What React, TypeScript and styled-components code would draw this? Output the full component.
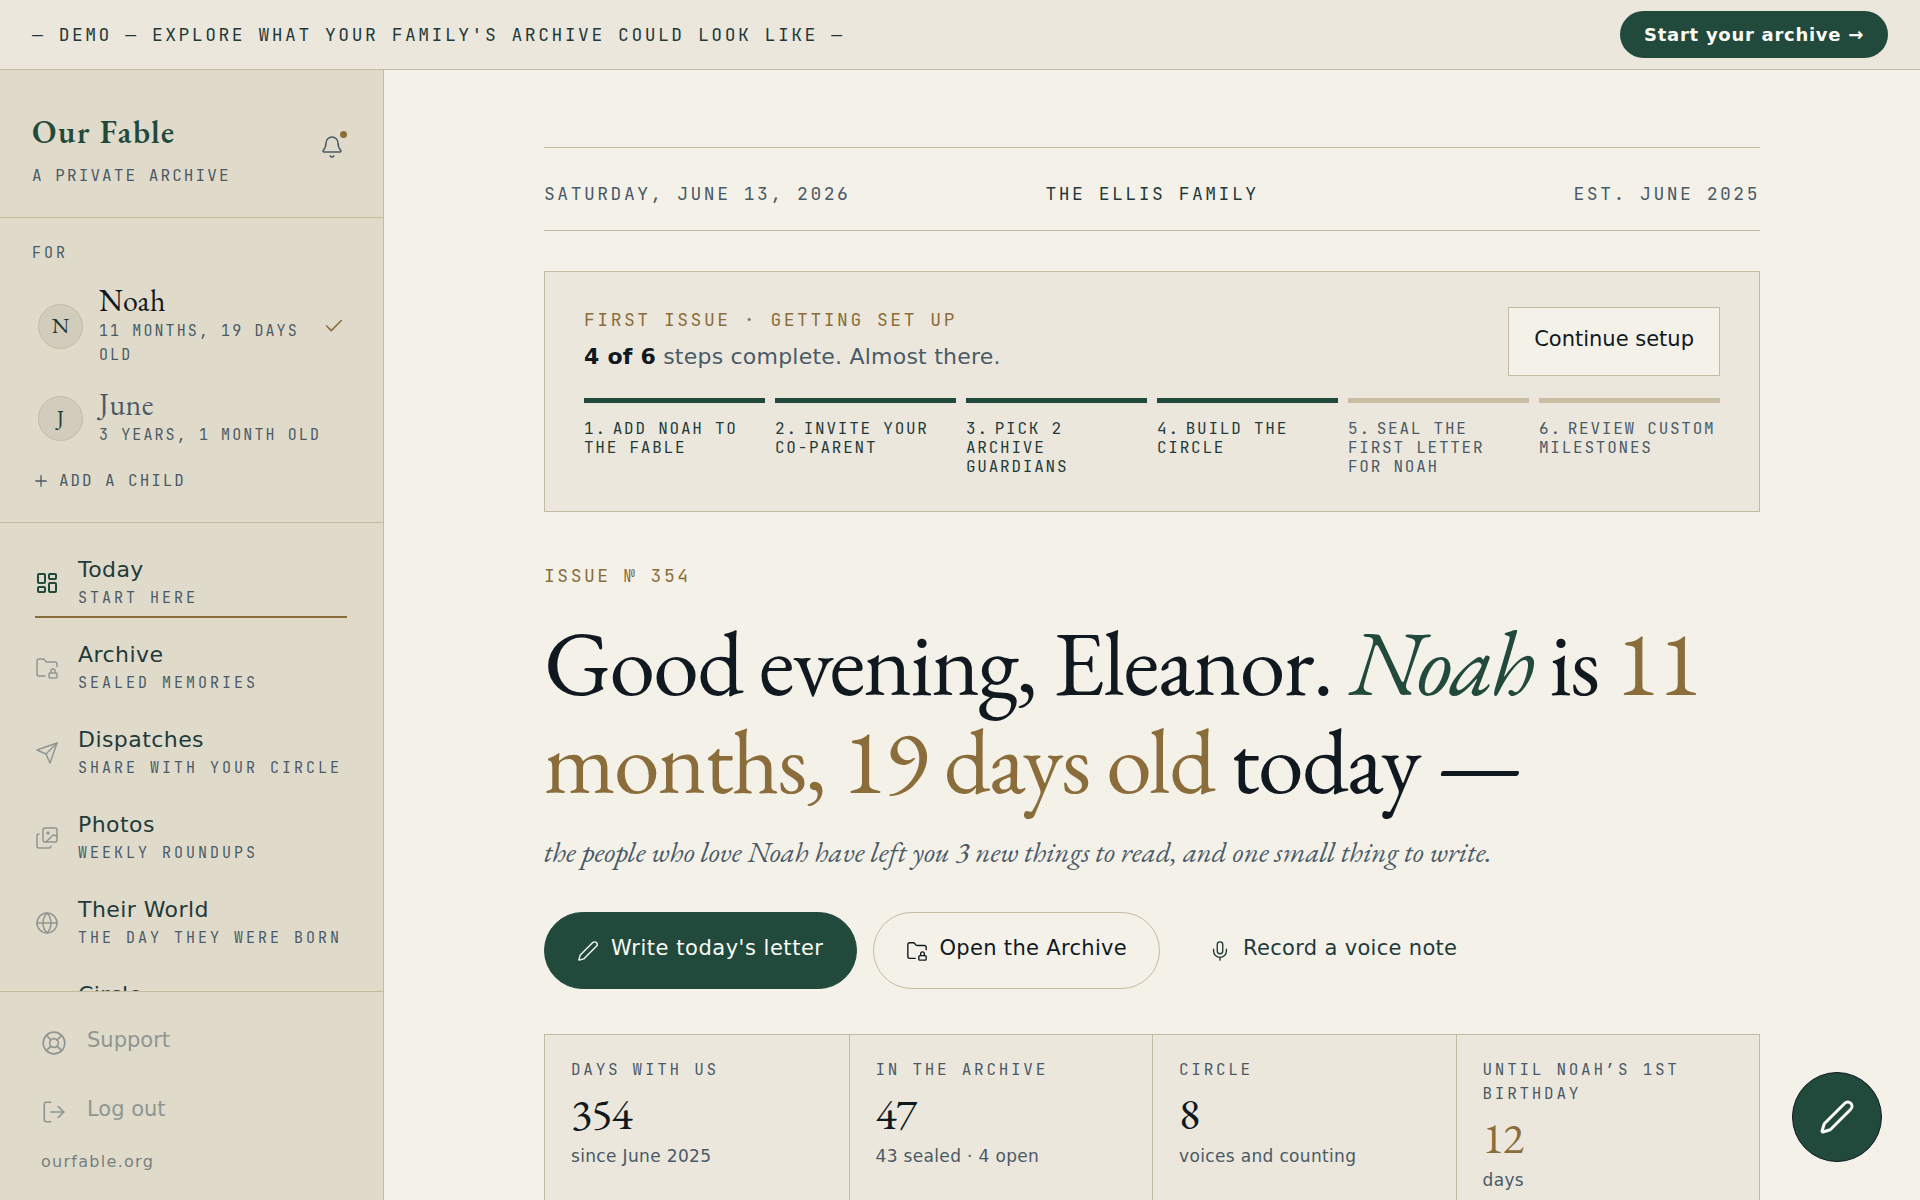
import React from "react";
import styled, { createGlobalStyle } from "styled-components";
import {
  Bell,
  Check,
  FolderLock,
  Globe,
  Images,
  LayoutDashboard,
  LifeBuoy,
  LogOut,
  Mic,
  Plus,
  Users,
} from "lucide-react";

const color = {
  paper: "#f4f1e9",
  panel: "#ebe7dc",
  sidebar: "#e0daca",
  rule: "#c5bba0",
  pending: "#c8bea4",
  green: "#214a3c",
  gold: "#8b6d3b",
  ink: "#101820",
  pine: "#1f3a3a",
  slate: "#4a5a66",
  muted: "#8f9692",
};

const serif = `"EB Garamond", "Liberation Serif", serif`;
const mono = `"JetBrains Mono", "DejaVu Sans Mono", monospace`;
const sans = `"DejaVu Sans", sans-serif`;

const GlobalStyle = createGlobalStyle`
  *, *::before, *::after { box-sizing: border-box; }
  body {
    margin: 0;
    background: ${color.paper};
    color: ${color.ink};
    font-family: ${sans};
  }
  h1, h2, p, ul, ol, dl, dd { margin: 0; padding: 0; }
  ul, ol { list-style: none; }
  a { color: inherit; text-decoration: none; }
  button { margin: 0; padding: 0; border: 0; background: none; color: inherit; font: inherit; cursor: pointer; }
  svg { display: block; flex: none; }
`;

const Shell = styled.div`
  height: 100vh;
  display: grid;
  grid-template-rows: auto minmax(0, 1fr);
`;

const DemoBar = styled.header`
  display: flex;
  align-items: center;
  justify-content: space-between;
  padding: 11px 32px;
  background: ${color.panel};
  border-bottom: 1px solid ${color.rule};
`;

const Kicker = styled.p<{ $tone?: string }>`
  font: 400 18px/26px ${mono};
  letter-spacing: 0.14em;
  text-transform: uppercase;
  color: ${(p) => p.$tone ?? color.slate};
`;

const StartLink = styled.a`
  padding: 0 24px;
  border-radius: 24px;
  background: ${color.green};
  color: #fbfaf5;
  font: 700 18px/47px ${sans};
  letter-spacing: 0.04em;
`;

const Body = styled.div`
  display: grid;
  grid-template-columns: 384px minmax(0, 1fr);
  min-height: 0;
`;

const Sidebar = styled.aside`
  display: flex;
  flex-direction: column;
  min-height: 0;
  background: ${color.sidebar};
  border-right: 1px solid ${color.rule};
`;

const Brand = styled.div`
  display: flex;
  align-items: center;
  justify-content: space-between;
  padding: 36px 32px 29px;
  border-bottom: 1px solid ${color.rule};
`;

const BrandText = styled.div`
  display: grid;
  gap: 6px;
`;

const BrandName = styled.a`
  font: 600 32px/52px ${serif};
  letter-spacing: 0.05em;
  color: ${color.green};
`;

const Tagline = styled.p`
  font: 400 16px/24px ${mono};
  letter-spacing: 0.13em;
  text-transform: uppercase;
  color: ${color.slate};
`;

const BellButton = styled.button`
  position: relative;
  display: grid;
  place-items: center;
  width: 38px;
  height: 40px;
  color: ${color.slate};
`;

const BellDot = styled.span`
  position: absolute;
  top: 4px;
  right: 4px;
  width: 7px;
  height: 7px;
  border-radius: 50%;
  background: ${color.gold};
`;

const Children = styled.section`
  padding: 23px 32px 29px;
  border-bottom: 1px solid ${color.rule};
`;

const SmallCaps = styled.span<{ $track?: string }>`
  display: block;
  font: 400 15px/24px ${mono};
  letter-spacing: ${(p) => p.$track ?? "0.2em"};
  text-transform: uppercase;
  color: ${color.slate};
`;

const ChildList = styled.ul`
  display: grid;
  gap: 4px;
  padding: 11px 0 13px;
`;

const ChildButton = styled.button<{ $active?: boolean }>`
  display: flex;
  align-items: center;
  width: 100%;
  padding: 9px 6px;
  text-align: left;
  color: ${(p) => (p.$active ? color.ink : color.slate)};
`;

const Avatar = styled.span`
  flex: none;
  display: grid;
  place-items: center;
  width: 45px;
  height: 45px;
  margin-right: 16px;
  border: 1px solid ${color.rule};
  border-radius: 50%;
  background: #d2ccbc;
  color: ${color.pine};
  font: 400 22px/24px ${serif};
`;

const ChildText = styled.span`
  flex: 1;
  min-width: 0;
`;

const ChildName = styled.span`
  display: block;
  padding-bottom: 2px;
  font: 400 30px/32px ${serif};
  letter-spacing: 0.01em;
`;

const AddChild = styled.button`
  display: flex;
  align-items: center;
  gap: 9px;
  color: ${color.slate};
  font: 400 16px/24px ${mono};
  letter-spacing: 0.12em;
  text-transform: uppercase;
`;

const Nav = styled.nav`
  flex: 1;
  min-height: 0;
  overflow-y: auto;
  scrollbar-width: none;
  padding: 24px 36px 24px 35px;
`;

const NavList = styled.ul`
  display: grid;
  gap: 14px;
`;

const NavLink = styled.a<{ $active?: boolean }>`
  display: flex;
  align-items: center;
  gap: 19px;
  padding: 6px 0;
  border-bottom: 2px solid ${(p) => (p.$active ? color.gold : "transparent")};
  color: ${(p) => (p.$active ? color.green : color.muted)};

  svg {
    margin-top: 2px;
  }
`;

const NavTitle = styled.span`
  display: block;
  font: 400 22px/33px ${sans};
  letter-spacing: 0.02em;
  color: ${color.pine};
`;

const NavText = styled.span`
  white-space: nowrap;
`;

const SideFooter = styled.footer`
  padding: 16px 41px 26px;
  border-top: 1px solid ${color.rule};
`;

const FootLink = styled.a`
  display: flex;
  align-items: center;
  gap: 20px;
  height: 69px;
  color: ${color.muted};
`;

const Site = styled.a`
  display: block;
  padding-top: 4px;
  font: 400 16px/24px ${sans};
  letter-spacing: 0.08em;
  color: #75807f;
`;

/* Text beside an icon rides slightly above the icon's centre line. */
const Raised = styled.span`
  padding-bottom: 4px;
  font: 400 21px/31px ${sans};
`;

const Main = styled.main`
  min-height: 0;
  overflow-y: auto;
  scrollbar-width: none;
  padding: 77px 64px 64px;
`;

const Page = styled.div`
  max-width: 1216px;
  margin: 0 auto;
`;

const Masthead = styled.header`
  display: grid;
  grid-template-columns: 1fr auto 1fr;
  padding: 33px 0 23px;
  border: solid ${color.rule};
  border-width: 1px 0;

  & > :last-child {
    text-align: right;
  }
`;

const Setup = styled.section`
  margin-top: 40px;
  padding: 35px 39px;
  border: 1px solid ${color.rule};
  background: ${color.panel};
`;

const SetupTop = styled.div`
  display: flex;
  align-items: flex-start;
  justify-content: space-between;
`;

const Progress = styled.p`
  padding-top: 6px;
  font: 400 22px/36px ${sans};
  letter-spacing: 0.01em;
  color: ${color.slate};

  strong {
    color: ${color.ink};
  }
`;

const Continue = styled.button`
  display: flex;
  padding: 16px 25px;
  border: 1px solid ${color.rule};
  background: ${color.paper};
`;

const Steps = styled.ol`
  display: grid;
  grid-template-columns: repeat(6, minmax(0, 1fr));
  gap: 10px;
  margin-top: 22px;
`;

const Step = styled.li<{ $done: boolean }>`
  padding-top: 16px;
  border-top: 5px solid ${(p) => (p.$done ? color.green : color.pending)};
  color: ${(p) => (p.$done ? color.pine : color.slate)};
  font: 400 16px/19px ${mono};
  letter-spacing: 0.11em;
  text-transform: uppercase;
`;

const StepNumber = styled.span`
  margin-right: 6px;
`;

const Greeting = styled.section`
  padding-top: 51px;
`;

const Headline = styled.h1`
  margin-top: 24px;
  font: 400 92px/98px ${serif};
  letter-spacing: -0.018em;

  em {
    color: ${color.green};
    letter-spacing: -0.028em;
  }
`;

const Age = styled.span`
  color: ${color.gold};
`;

const Lede = styled.p`
  margin-top: 23px;
  font: italic 400 29px/40px ${serif};
  color: ${color.slate};
`;

const Actions = styled.div`
  display: flex;
  flex-wrap: wrap;
  gap: 16px;
  margin-top: 40px;
`;

const Action = styled.button<{ $kind: "solid" | "outline" | "plain" }>`
  display: flex;
  align-items: center;
  gap: 12px;
  padding: 20px 32px;
  border: 1px solid
    ${(p) => ({ solid: color.green, outline: color.rule, plain: "transparent" })[p.$kind]};
  border-radius: 40px;
  background: ${(p) => (p.$kind === "solid" ? color.green : "transparent")};
  color: ${(p) => ({ solid: "#fbfaf5", outline: color.ink, plain: color.pine })[p.$kind]};

  ${Raised} {
    letter-spacing: ${(p) => (p.$kind === "solid" ? "0.025em" : "0.015em")};
  }
`;

const Stats = styled.dl`
  display: grid;
  grid-template-columns: repeat(4, minmax(0, 1fr));
  margin-top: 45px;
  border: 1px solid ${color.rule};
  background: ${color.panel};
`;

const Stat = styled.div`
  padding: 23px 26px 32px;

  & + & {
    border-left: 1px solid ${color.rule};
  }
`;

const StatLabel = styled.dt`
  font: 400 16px/24px ${mono};
  letter-spacing: 0.17em;
  text-transform: uppercase;
  color: ${color.slate};
`;

const StatValue = styled.dd<{ $accent?: boolean }>`
  padding-top: 8px;
  font: 400 44px/48px ${serif};
  letter-spacing: -0.02em;
  color: ${(p) => (p.$accent ? color.gold : color.ink)};
`;

const StatNote = styled.dd`
  padding-top: 5px;
  font: 400 17px/26px ${sans};
  letter-spacing: 0.02em;
  color: ${color.slate};
`;

const Compose = styled.button`
  position: fixed;
  right: 38px;
  bottom: 38px;
  display: grid;
  place-items: center;
  width: 90px;
  height: 90px;
  border: 1px solid ${color.ink};
  border-radius: 50%;
  background: ${color.green};
  color: #fbfaf5;
`;

function Pen({ size, strokeWidth = 1.5 }: { size: number; strokeWidth?: number }) {
  return (
    <svg width={size} height={size} viewBox="0 0 24 24" fill="none" stroke="currentColor" strokeWidth={strokeWidth} strokeLinecap="round" strokeLinejoin="round" aria-hidden="true">
      <path d="M21.174 6.812a1 1 0 0 0-3.986-3.987L3.842 16.174a2 2 0 0 0-.5.83l-1.321 4.352a.5.5 0 0 0 .623.622l4.353-1.32a2 2 0 0 0 .83-.497z" />
    </svg>
  );
}

function Plane({ size, strokeWidth = 1.5 }: { size: number; strokeWidth?: number }) {
  return (
    <svg width={size} height={size} viewBox="0 0 24 24" fill="none" stroke="currentColor" strokeWidth={strokeWidth} strokeLinecap="round" strokeLinejoin="round" aria-hidden="true">
      <path d="m22 2-7 20-4-9-9-4Z" />
      <path d="M22 2 11 13" />
    </svg>
  );
}

const kids = [
  { initial: "N", name: "Noah", age: "11 months, 19 days old", active: true },
  { initial: "J", name: "June", age: "3 years, 1 month old", active: false },
];

const sections = [
  { title: "Today", note: "Start here", Icon: LayoutDashboard },
  { title: "Archive", note: "Sealed memories", Icon: FolderLock },
  { title: "Dispatches", note: "Share with your circle", Icon: Plane },
  { title: "Photos", note: "Weekly roundups", Icon: Images },
  { title: "Their World", note: "The day they were born", Icon: Globe },
  { title: "Circle", note: "Your people", Icon: Users },
];

const steps = [
  "Add Noah to the fable",
  "Invite your co-parent",
  "Pick 2 archive guardians",
  "Build the circle",
  "Seal the first letter for Noah",
  "Review custom milestones",
];
const stepsDone = 4;

const stats = [
  { label: "Days with us", value: "354", note: "since June 2025" },
  { label: "In the archive", value: "47", note: "43 sealed · 4 open" },
  { label: "Circle", value: "8", note: "voices and counting" },
  { label: "Until Noah’s 1st birthday", value: "12", note: "days", accent: true },
];

export default function App() {
  return (
    <>
      <GlobalStyle />
      <Shell>
        <DemoBar>
          <Kicker $tone={color.pine}>— Demo — Explore what your family's archive could look like —</Kicker>
          <StartLink href="#start">Start your archive →</StartLink>
        </DemoBar>
        <Body>
          <Sidebar>
            <Brand>
              <BrandText>
                <BrandName href="#home">Our Fable</BrandName>
                <Tagline>A private archive</Tagline>
              </BrandText>
              <BellButton aria-label="Notifications">
                <Bell size={24} strokeWidth={1.5} />
                <BellDot />
              </BellButton>
            </Brand>

            <Children>
              <SmallCaps>For</SmallCaps>
              <ChildList>
                {kids.map((kid) => (
                  <li key={kid.name}>
                    <ChildButton $active={kid.active}>
                      <Avatar>{kid.initial}</Avatar>
                      <ChildText>
                        <ChildName>{kid.name}</ChildName>
                        <SmallCaps $track="0.14em">{kid.age}</SmallCaps>
                      </ChildText>
                      {kid.active && <Check size={22} strokeWidth={1.75} color={color.gold} />}
                    </ChildButton>
                  </li>
                ))}
              </ChildList>
              <AddChild>
                <Plus size={18} strokeWidth={1.75} />
                Add a child
              </AddChild>
            </Children>

            <Nav aria-label="Main">
              <NavList>
                {sections.map(({ title, note, Icon }, i) => (
                  <li key={title}>
                    <NavLink href={`#${title}`} $active={i === 0}>
                      <Icon size={24} strokeWidth={i === 0 ? 2 : 1.5} />
                      <NavText>
                        <NavTitle>{title}</NavTitle>
                        <SmallCaps>{note}</SmallCaps>
                      </NavText>
                    </NavLink>
                  </li>
                ))}
              </NavList>
            </Nav>

            <SideFooter>
              <FootLink href="#support">
                <LifeBuoy size={26} strokeWidth={1.5} />
                <Raised>Support</Raised>
              </FootLink>
              <FootLink href="#logout">
                <LogOut size={26} strokeWidth={1.5} />
                <Raised>Log out</Raised>
              </FootLink>
              <Site href="#site">ourfable.org</Site>
            </SideFooter>
          </Sidebar>

          <Main>
            <Page>
              <Masthead>
                <Kicker>Saturday, June 13, 2026</Kicker>
                <Kicker $tone={color.pine}>The Ellis Family</Kicker>
                <Kicker>Est. June 2025</Kicker>
              </Masthead>

              <Setup>
                <SetupTop>
                  <div>
                    <Kicker $tone={color.gold}>First issue · Getting set up</Kicker>
                    <Progress>
                      <strong>{stepsDone} of {steps.length}</strong> steps complete. Almost there.
                    </Progress>
                  </div>
                  <Continue>
                    <Raised>Continue setup</Raised>
                  </Continue>
                </SetupTop>
                <Steps>
                  {steps.map((step, i) => (
                    <Step key={step} $done={i < stepsDone}>
                      <StepNumber>{i + 1}.</StepNumber>
                      {step}
                    </Step>
                  ))}
                </Steps>
              </Setup>

              <Greeting>
                <Kicker $tone={color.gold}>Issue № 354</Kicker>
                <Headline>
                  Good evening, Eleanor. <em>Noah</em> is <Age>11 months, 19 days old</Age> today —
                </Headline>
                <Lede>the people who love Noah have left you 3 new things to read, and one small thing to write.</Lede>
                <Actions>
                  <Action $kind="solid">
                    <Pen size={22} />
                    <Raised>Write today's letter</Raised>
                  </Action>
                  <Action $kind="outline">
                    <FolderLock size={22} strokeWidth={1.5} />
                    <Raised>Open the Archive</Raised>
                  </Action>
                  <Action $kind="plain">
                    <Mic size={22} strokeWidth={1.5} />
                    <Raised>Record a voice note</Raised>
                  </Action>
                </Actions>
              </Greeting>

              <Stats>
                {stats.map((stat) => (
                  <Stat key={stat.label}>
                    <StatLabel>{stat.label}</StatLabel>
                    <StatValue $accent={stat.accent}>{stat.value}</StatValue>
                    <StatNote>{stat.note}</StatNote>
                  </Stat>
                ))}
              </Stats>
            </Page>
          </Main>
        </Body>
      </Shell>
      <Compose aria-label="Write a letter">
        <Pen size={36} strokeWidth={2} />
      </Compose>
    </>
  );
}
